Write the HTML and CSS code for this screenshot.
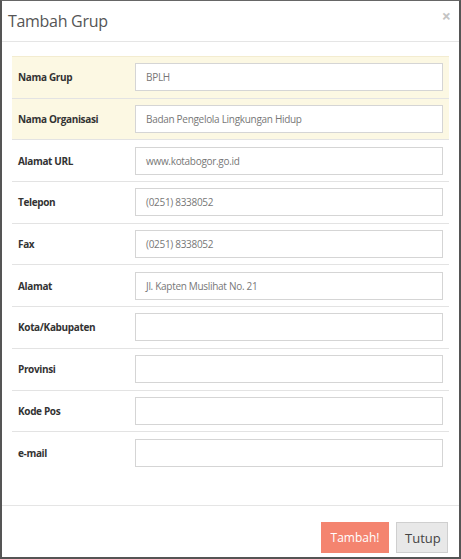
FILE: index.html
```html
<!DOCTYPE html>
<html>
<head>
<meta charset="utf-8">
<link rel="stylesheet" href="styles.css">
</head>
<body>
<div class="modal">
  <div class="modal-header">
    <h4 class="title">Tambah Grup</h4>
    <span class="close">×</span>
  </div>
  <div class="modal-body">
    <table class="form-table">
      <tr class="warn"><th>Nama Grup</th><td><div class="input">BPLH</div></td></tr>
      <tr class="warn"><th>Nama Organisasi</th><td><div class="input">Badan Pengelola Lingkungan Hidup</div></td></tr>
      <tr><th>Alamat URL</th><td><div class="input">www.kotabogor.go.id</div></td></tr>
      <tr><th>Telepon</th><td><div class="input">(0251) 8338052</div></td></tr>
      <tr><th>Fax</th><td><div class="input">(0251) 8338052</div></td></tr>
      <tr><th>Alamat</th><td><div class="input">Jl. Kapten Muslihat No. 21</div></td></tr>
      <tr><th>Kota/Kabupaten</th><td><div class="input"></div></td></tr>
      <tr><th>Provinsi</th><td><div class="input"></div></td></tr>
      <tr><th>Kode Pos</th><td><div class="input"></div></td></tr>
      <tr><th>e-mail</th><td><div class="input"></div></td></tr>
    </table>
  </div>
  <div class="modal-footer">
    <button class="btn btn-add">Tambah!</button>
    <button class="btn btn-close">Tutup</button>
  </div>
</div>
</body>
</html>
```
FILE: styles.css
```css
html, body {
  margin: 0;
  padding: 0;
  background: #fff;
}
body {
  font-family: "Open Sans", "DejaVu Sans", sans-serif;
  color: #333;
}
.modal {
  box-sizing: border-box;
  width: 461px;
  height: 559px;
  border-top: 1px solid #666;
  border-left: 2px solid #555;
  border-right: 2px solid #555;
  border-bottom: 2px solid #555;
  background: #fff;
  display: flex;
  flex-direction: column;
}
.modal-header {
  height: 40px;
  border-bottom: 1px solid #e5e5e5;
  display: flex;
  align-items: center;
  justify-content: space-between;
  padding: 0 8px 0 6px;
}
.title {
  margin: 0;
  font-size: 16px;
  font-weight: 400;
  letter-spacing: -0.3px;
  color: #555;
}
.close {
  font-size: 16px;
  font-weight: 700;
  color: #c4c4c4;
  margin-top: -10px;
}
.modal-body {
  padding: 14px 10px 0 10px;
  height: 463px;
  box-sizing: border-box;
}
.form-table {
  width: 100%;
  border-collapse: collapse;
}
.form-table tr {
  height: 41.7px;
}
.form-table tr + tr th,
.form-table tr + tr td {
  border-top: 1px solid #e3e3e3;
}
.form-table tr:first-child th,
.form-table tr:first-child td {
  border-top: 1px solid #f3ecd0;
}
.form-table tr.warn {
  background: #fcf8e3;
}
.form-table th {
  width: 105px;
  text-align: left;
  font-size: 10px;
  font-weight: 700;
  letter-spacing: -0.35px;
  color: #333;
  padding: 0 6px;
}
.form-table td {
  padding: 0 6px;
}
.input {
  box-sizing: border-box;
  height: 28px;
  border: 1px solid #d5d5d5;
  background: #fff;
  font-size: 10px;
  letter-spacing: -0.3px;
  color: #777;
  padding: 0 10px;
  display: flex;
  align-items: center;
}
.modal-footer {
  flex: 1;
  border-top: 1px solid #e5e5e5;
  display: flex;
  justify-content: flex-end;
  align-items: flex-start;
  padding: 16px 11px 0 0;
  gap: 7px;
}
.btn {
  font-family: "Open Sans", "DejaVu Sans", sans-serif;
  height: 31px;
  font-size: 12px;
  border: 1px solid transparent;
  padding: 0 8px;
  cursor: pointer;
}
.btn-add {
  width: 68px;
  background: #f4846f;
  color: #fff;
}
.btn-close {
  width: 52px;
  background: #e8e8e8;
  border-color: #cfcfcf;
  color: #444;
  font-size: 13px;
}
```
